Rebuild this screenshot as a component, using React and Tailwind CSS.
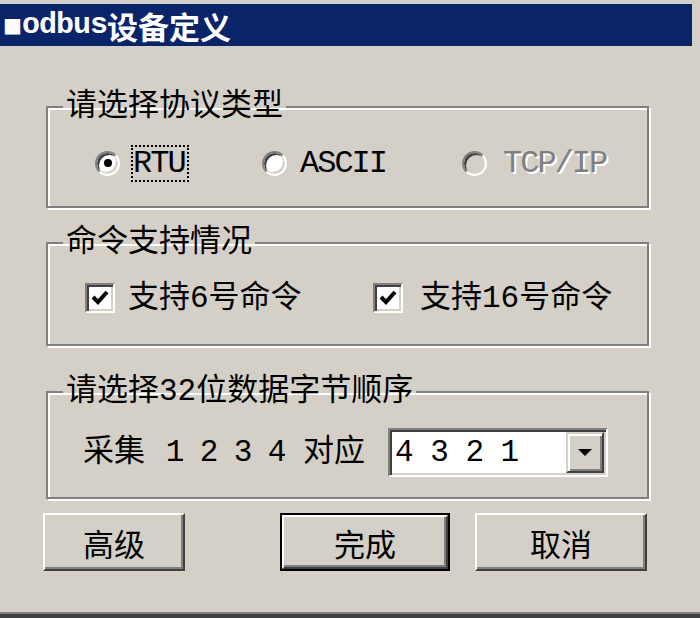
import React from "react";

const cjk = "font-['Noto_Sans_CJK_SC',sans-serif]";
const mono = "font-['Liberation_Mono','Noto_Sans_CJK_SC',monospace]";

const Radio = ({ checked, disabled }) => (
  <span
    className={`relative flex h-[25px] w-[25px] shrink-0 items-center justify-center rounded-full border-2 border-t-[#808080] border-l-[#808080] border-b-white border-r-white shadow-[inset_2px_2px_0_#404040,inset_-2px_-2px_0_#d4d0c8] ${
      disabled ? "bg-[#d4d0c8]" : "bg-white"
    }`}
  >
    {checked && <span className="h-[8px] w-[8px] rounded-full bg-black" />}
  </span>
);

const Checkbox = () => (
  <span className="flex h-[30px] w-[30px] shrink-0 items-center justify-center border-2 border-t-[#808080] border-l-[#808080] border-b-white border-r-white bg-white shadow-[inset_2px_2px_0_#404040,inset_-2px_-2px_0_#d4d0c8]">
    <svg width="20" height="18" viewBox="0 0 20 18">
      <polyline points="3,8 8,13 17,3" fill="none" stroke="#000" strokeWidth="4" />
    </svg>
  </span>
);

const Group = ({ title, className, children }) => (
  <fieldset
    className={`ml-[46px] w-[603px] border-2 border-[#808080] shadow-[2px_2px_0_#fff,inset_2px_2px_0_#fff] ${className}`}
  >
    <legend className={`ml-[15px] px-[3px] text-[31px] leading-[30px] text-black ${mono}`}>
      {title}
    </legend>
    {children}
  </fieldset>
);

const Button = ({ children, isDefault, className }) => (
  <button
    className={`${className} h-[58px] ${isDefault ? "border-2 border-black" : ""}`}
  >
    <span className="flex h-full w-full items-center justify-center border-2 border-t-white border-l-white border-r-[#404040] border-b-[#404040] shadow-[inset_-2px_-2px_0_#808080] text-[31px] leading-none text-black">
      <span className={cjk}>{children}</span>
    </span>
  </button>
);

export default function App() {
  return (
    <div className="flex h-[618px] w-[700px] flex-col overflow-hidden bg-[#d4d0c8]">
      {/* title bar */}
      <div className="mt-[4px] mr-[8px] flex h-[42px] items-center bg-[#0a246a] pl-[3px] font-bold text-white">
        <span className="font-['DejaVu_Sans',sans-serif] text-[20px] leading-none">■</span>
        <span className={`${mono} text-[30px] leading-none tracking-[-1px]`}>odbus</span>
        <span className={`${cjk} text-[31px] leading-none`}>设备定义</span>
      </div>

      {/* protocol */}
      <Group title="请选择协议类型" className="mt-[46px] h-[116px]">
        <div className={`mt-[22px] flex h-[38px] items-center pl-[47px] text-[32px] tracking-[-2px] ${mono}`}>
          <div className="flex w-[167px] items-center">
            <Radio checked />
            <span className="ml-[11px] border-2 border-dotted border-black pr-[2px] leading-[33px]">RTU</span>
          </div>
          <div className="flex w-[200px] items-center">
            <Radio />
            <span className="ml-[11px] border-2 border-transparent leading-[33px]">ASCII</span>
          </div>
          <div className="flex items-center">
            <Radio disabled />
            <span className="ml-[14px] border-2 border-transparent leading-[33px] text-[#808080] [text-shadow:2px_2px_0_#fff]">
              TCP/IP
            </span>
          </div>
        </div>
      </Group>

      {/* commands */}
      <Group title="命令支持情况" className="mt-[20px] h-[118px]">
        <div className={`mt-[25px] flex h-[30px] items-center pl-[37px] text-[31px] ${mono}`}>
          <div className="flex w-[288px] items-center">
            <Checkbox />
            <span className="ml-[13px] leading-none">支持6号命令</span>
          </div>
          <div className="flex items-center">
            <Checkbox />
            <span className="ml-[17px] leading-none">支持16号命令</span>
          </div>
        </div>
      </Group>

      {/* byte order */}
      <Group title="请选择32位数据字节顺序" className="mt-[31px] h-[122px]">
        <div className={`mt-[21px] flex h-[49px] items-center pl-[35px] text-[31px] ${mono}`}>
          <span className="leading-none">采集</span>
          <span className="ml-[13px] flex leading-none">
            {["1", "2", "3", "4"].map((d) => (
              <span key={d} className="w-[34px] text-center">
                {d}
              </span>
            ))}
          </span>
          <span className="ml-[9px] leading-none">对应</span>
          <div className="ml-[23px] flex h-[49px] w-[220px] items-center border-2 border-t-[#808080] border-l-[#808080] border-b-white border-r-white bg-white shadow-[inset_2px_2px_0_#404040,inset_-2px_-2px_0_#d4d0c8]">
            <span className="flex-1 pl-[5px] font-['Liberation_Mono',monospace] text-[31px] leading-none tracking-[-1px]">
              4 3 2 1
            </span>
            <span className="mr-[2px] flex h-[41px] w-[38px] items-center justify-center border-2 border-t-[#d4d0c8] border-l-[#d4d0c8] border-r-[#404040] border-b-[#404040] bg-[#d4d0c8] shadow-[inset_2px_2px_0_#fff,inset_-2px_-2px_0_#808080]">
              <svg width="14" height="8" viewBox="0 0 14 8">
                <polygon points="0,0 14,0 7,7" fill="#000" />
              </svg>
            </span>
          </div>
        </div>
      </Group>

      {/* buttons */}
      <div className="mt-[14px] flex">
        <Button className="ml-[43px] w-[142px]">高级</Button>
        <Button isDefault className="ml-[95px] w-[170px]">
          完成
        </Button>
        <Button className="ml-[25px] w-[172px]">取消</Button>
      </div>

      <div className="flex-1" />
      <div className="h-[6px] border-t-2 border-[#808080] bg-[#404040]" />
    </div>
  );
}
